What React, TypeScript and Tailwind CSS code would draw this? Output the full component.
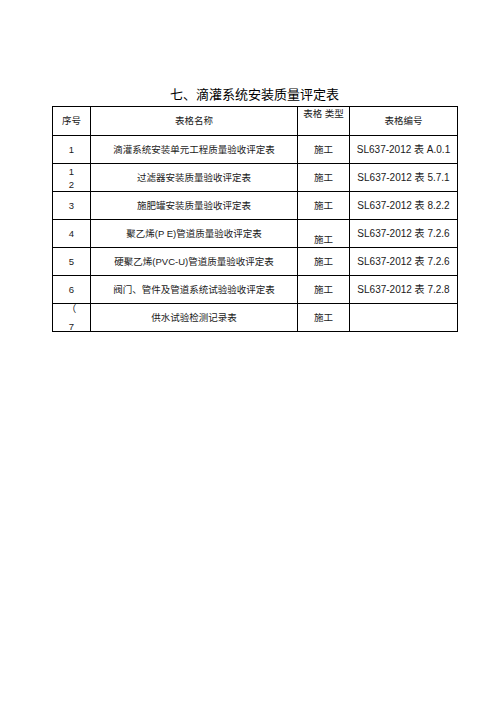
import React from 'react';

type Row = {
  no: React.ReactNode;
  name: string;
  type: string;
  code: string;
  typeAlign?: string;
};

const rows: Row[] = [
  { no: '1', name: '滴灌系统安装单元工程质量验收评定表', type: '施工', code: 'SL637-2012 表 A.0.1' },
  {
    no: (
      <div className="flex flex-col leading-[13px]">
        <span>1</span>
        <span>2</span>
      </div>
    ),
    name: '过滤器安装质量验收评定表',
    type: '施工',
    code: 'SL637-2012 表 5.7.1',
  },
  { no: '3', name: '施肥罐安装质量验收评定表', type: '施工', code: 'SL637-2012 表 8.2.2' },
  { no: '4', name: '聚乙烯(P E)管道质量验收评定表', type: '施工', code: 'SL637-2012 表 7.2.6', typeAlign: 'align-bottom pb-[1px]' },
  { no: '5', name: '硬聚乙烯(PVC-U)管道质量验收评定表', type: '施工', code: 'SL637-2012 表 7.2.6' },
  { no: '6', name: '阀门、管件及管道系统试验验收评定表', type: '施工', code: 'SL637-2012 表 7.2.8' },
  {
    no: (
      <div className="flex flex-col leading-[9px]">
        <span>（</span>
        <span className="mt-[9px]">7</span>
      </div>
    ),
    name: '供水试验检测记录表',
    type: '施工',
    code: '',
  },
];

export default function App() {
  return (
    <div className="bg-white min-h-[711px] w-[503px] text-[#1a1a1a] font-['Liberation_Sans','Noto_Sans_CJK_SC',sans-serif]">
      <div className="ml-[52px] w-[405px] pt-[86px]">
        <h1 className="text-center text-[13px] leading-[18px] h-[18px] mb-[2px] text-black">
          七、滴灌系统安装质量评定表
        </h1>
        <table className="w-[405px] border-collapse table-fixed text-[9.5px] leading-[12px]">
          <colgroup>
            <col className="w-[38px]" />
            <col className="w-[207px]" />
            <col className="w-[52px]" />
            <col className="w-[108px]" />
          </colgroup>
          <thead>
            <tr className="h-[29px]">
              <th className="border border-black font-normal text-center align-middle p-0">序号</th>
              <th className="border border-black font-normal text-center align-middle p-0">表格名称</th>
              <th className="border border-black font-normal text-center align-top pt-[1px] px-0 whitespace-pre">表格 类型</th>
              <th className="border border-black font-normal text-center align-middle p-0">表格编号</th>
            </tr>
          </thead>
          <tbody>
            {rows.map((r, i) => (
              <tr key={i} className="h-[28px]">
                <td className="border border-black text-center align-middle p-0">
                  <div className="flex justify-center">{r.no}</div>
                </td>
                <td className="border border-black text-center align-middle whitespace-nowrap p-0">{r.name}</td>
                <td className={`border border-black text-center p-0 ${r.typeAlign ?? 'align-middle'}`}>{r.type}</td>
                <td className="border border-black text-center align-middle whitespace-pre p-0 text-[10px]">{r.code}</td>
              </tr>
            ))}
          </tbody>
        </table>
      </div>
    </div>
  );
}
